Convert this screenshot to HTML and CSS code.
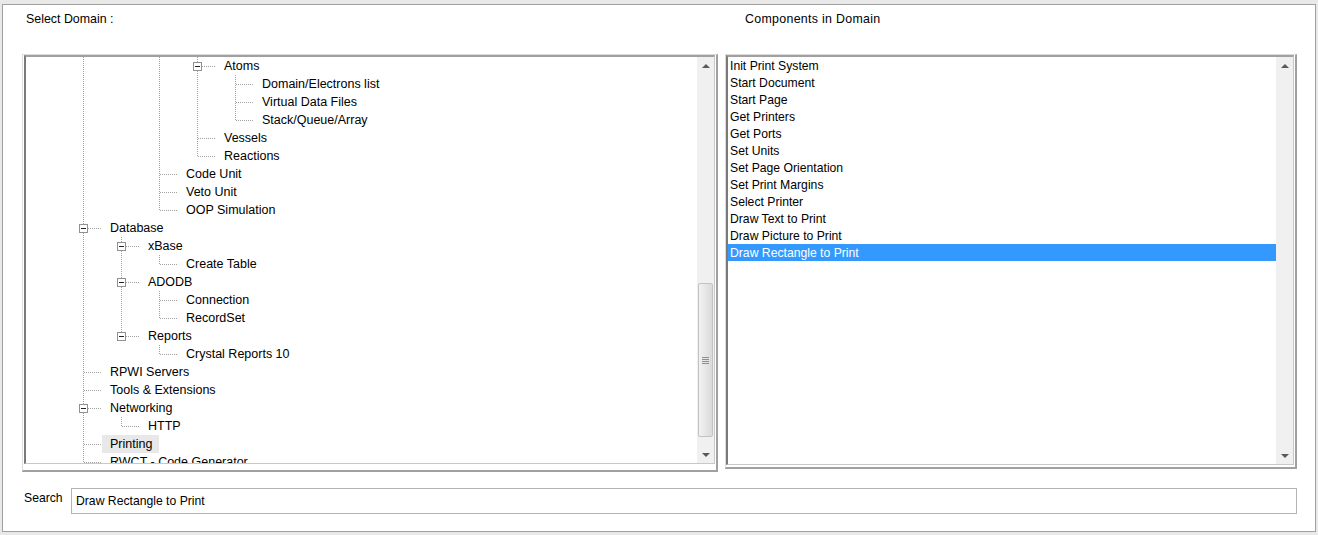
FILE: index.html
```html
<!DOCTYPE html>
<html>
<head>
<meta charset="utf-8">
<title>Select Domain</title>
<link rel="stylesheet" href="styles.css">
</head>
<body>
<div class="window">
  <div class="headings">
    <div class="heading heading-left">Select Domain :</div>
    <div class="heading heading-right">Components in Domain</div>
  </div>
  <div class="panes">
    <div class="frame frame-left">
      <div class="tree">
        <div class="tree-content">
          <div class="row"><span class="c l"></span><span class="c"></span><span class="c l"></span><span class="c t"><i class="box"></i></span><span class="lbl">Atoms</span></div>
          <div class="row"><span class="c l"></span><span class="c"></span><span class="c l"></span><span class="c l"></span><span class="c t"></span><span class="lbl">Domain/Electrons list</span></div>
          <div class="row"><span class="c l"></span><span class="c"></span><span class="c l"></span><span class="c l"></span><span class="c t"></span><span class="lbl">Virtual Data Files</span></div>
          <div class="row"><span class="c l"></span><span class="c"></span><span class="c l"></span><span class="c l"></span><span class="c e"></span><span class="lbl">Stack/Queue/Array</span></div>
          <div class="row"><span class="c l"></span><span class="c"></span><span class="c l"></span><span class="c t"></span><span class="lbl">Vessels</span></div>
          <div class="row"><span class="c l"></span><span class="c"></span><span class="c l"></span><span class="c e"></span><span class="lbl">Reactions</span></div>
          <div class="row"><span class="c l"></span><span class="c"></span><span class="c t"></span><span class="lbl">Code Unit</span></div>
          <div class="row"><span class="c l"></span><span class="c"></span><span class="c t"></span><span class="lbl">Veto Unit</span></div>
          <div class="row"><span class="c l"></span><span class="c"></span><span class="c e"></span><span class="lbl">OOP Simulation</span></div>
          <div class="row"><span class="c t"><i class="box"></i></span><span class="lbl">Database</span></div>
          <div class="row"><span class="c l"></span><span class="c t"><i class="box"></i></span><span class="lbl">xBase</span></div>
          <div class="row"><span class="c l"></span><span class="c l"></span><span class="c e"></span><span class="lbl">Create Table</span></div>
          <div class="row"><span class="c l"></span><span class="c t"><i class="box"></i></span><span class="lbl">ADODB</span></div>
          <div class="row"><span class="c l"></span><span class="c l"></span><span class="c t"></span><span class="lbl">Connection</span></div>
          <div class="row"><span class="c l"></span><span class="c l"></span><span class="c e"></span><span class="lbl">RecordSet</span></div>
          <div class="row"><span class="c l"></span><span class="c e"><i class="box"></i></span><span class="lbl">Reports</span></div>
          <div class="row"><span class="c l"></span><span class="c"></span><span class="c e"></span><span class="lbl">Crystal Reports 10</span></div>
          <div class="row"><span class="c t"></span><span class="lbl">RPWI Servers</span></div>
          <div class="row"><span class="c t"></span><span class="lbl">Tools &amp; Extensions</span></div>
          <div class="row"><span class="c t"><i class="box"></i></span><span class="lbl">Networking</span></div>
          <div class="row"><span class="c l"></span><span class="c e"></span><span class="lbl">HTTP</span></div>
          <div class="row"><span class="c t"></span><span class="lbl sel">Printing</span></div>
          <div class="row"><span class="c t"></span><span class="lbl">RWCT - Code Generator</span></div>
        </div>
        <div class="scrollbar">
          <div class="sb-btn"><i class="arrow-up"></i></div>
          <div class="sb-track">
            <div class="sb-thumb"><i class="grip"></i></div>
          </div>
          <div class="sb-btn"><i class="arrow-down"></i></div>
        </div>
      </div>
    </div>
    <div class="frame frame-right">
      <div class="list">
        <div class="list-content">
          <div class="item">Init Print System</div>
          <div class="item">Start Document</div>
          <div class="item">Start Page</div>
          <div class="item">Get Printers</div>
          <div class="item">Get Ports</div>
          <div class="item">Set Units</div>
          <div class="item">Set Page Orientation</div>
          <div class="item">Set Print Margins</div>
          <div class="item">Select Printer</div>
          <div class="item">Draw Text to Print</div>
          <div class="item">Draw Picture to Print</div>
          <div class="item selected">Draw Rectangle to Print</div>
        </div>
        <div class="scrollbar">
          <div class="sb-btn"><i class="arrow-up"></i></div>
          <div class="sb-track"></div>
          <div class="sb-btn"><i class="arrow-down"></i></div>
        </div>
      </div>
    </div>
  </div>
  <div class="search-row">
    <label class="search-label" for="search">Search</label>
    <input class="search-input" id="search" type="text" value="Draw Rectangle to Print">
  </div>
</div>
</body>
</html>
```

FILE: styles.css
```css
* { box-sizing: border-box; }

html, body {
  margin: 0;
  padding: 0;
}

body {
  background: #e9e9e9;
  font-family: "Liberation Sans", Arial, sans-serif;
  font-size: 12px;
  color: #000;
  width: 1318px;
  height: 535px;
  overflow: hidden;
}

.window {
  margin: 4px 2px 0 2px;
  height: 528px;
  background: #fff;
  border: 1px solid #a0a0a0;
  display: flex;
  flex-direction: column;
}

/* headings */
.headings {
  display: flex;
  height: 49px;
  padding-top: 7px;
  line-height: 14px;
  font-size: 12.4px;
}
.heading-left {
  width: 742px;
  padding-left: 23px;
}
.heading-right {
  padding-left: 0;
  letter-spacing: 0.3px;
}

/* panes */
.panes {
  display: flex;
  align-items: flex-start;
  padding-left: 19px;
  gap: 7px;
}

.frame {
  border-top: 1px solid #dcdcdc;
  border-left: 1px solid #dcdcdc;
  border-right: 2px solid #a0a0a0;
  border-bottom: 2px solid #a0a0a0;
}
.frame-left {
  width: 696px;
  height: 418px;
  padding: 0 1px 6px 1px;
}
.frame-right {
  width: 572px;
  height: 415px;
  padding: 0 1px 2px 0;
}

.tree, .list {
  height: 100%;
  display: flex;
  border-top: 2px solid #a0a0a0;
  border-left: 2px solid #7a7a7a;
  border-right: 1px solid #c8c8c8;
  border-bottom: 1px solid #c8c8c8;
  background: #fff;
  overflow: hidden;
}

.tree-content {
  flex: 1;
  overflow: hidden;
  padding-left: 38px;
  font-size: 12.5px;
}

.row {
  display: flex;
  height: 18px;
  align-items: stretch;
}

.c {
  position: relative;
  flex: none;
  width: 38px;
  height: 18px;
}

/* vertical dotted line through whole row */
.c.l::before,
.c.t::before,
.c.e::before {
  content: "";
  position: absolute;
  left: 19px;
  top: 0;
  width: 1px;
  height: 18px;
  background-image: linear-gradient(to bottom, #a0a0a0 50%, transparent 50%);
  background-size: 1px 2px;
}
.c.e::before {
  height: 10px;
}

/* horizontal connector */
.c.t::after,
.c.e::after {
  content: "";
  position: absolute;
  left: 20px;
  top: 9px;
  width: 18px;
  height: 1px;
  background-image: linear-gradient(to right, #a0a0a0 50%, transparent 50%);
  background-size: 2px 1px;
}

.box {
  position: absolute;
  left: 15px;
  top: 5px;
  width: 9px;
  height: 9px;
  border: 1px solid #919191;
  background: #fff;
  z-index: 1;
}
.box::after {
  content: "";
  position: absolute;
  left: 1px;
  top: 3px;
  width: 5px;
  height: 1px;
  background: #222;
}

.lbl {
  height: 18px;
  line-height: 17px;
  padding: 1px 7px 0 8px;
  white-space: nowrap;
}
.lbl.sel {
  background: #e8e8e8;
}

/* scrollbar */
.scrollbar {
  flex: none;
  width: 17px;
  display: flex;
  flex-direction: column;
  background: #f0f0f0;
}
.sb-btn {
  height: 17px;
  flex: none;
  display: flex;
  align-items: center;
  justify-content: center;
}
.sb-track {
  flex: 1;
}
.sb-thumb {
  margin-top: 209px;
  margin-left: 1px;
  width: 15px;
  height: 154px;
  border: 1px solid #c2c2c2;
  border-radius: 2px;
  background: linear-gradient(to right, #f2f2f2, #e4e4e4 60%, #dadada);
  display: flex;
  align-items: center;
  justify-content: center;
}
.grip {
  width: 7px;
  height: 7px;
  background: repeating-linear-gradient(to bottom, #8e8e8e 0 1px, transparent 1px 2px);
}
.arrow-up {
  width: 0;
  height: 0;
  border-left: 4px solid transparent;
  border-right: 4px solid transparent;
  border-bottom: 4px solid #5a5a5a;
}
.arrow-down {
  width: 0;
  height: 0;
  border-left: 4px solid transparent;
  border-right: 4px solid transparent;
  border-top: 4px solid #5a5a5a;
}

/* list */
.list-content {
  flex: 1;
  overflow: hidden;
  font-size: 12.2px;
}
.item {
  height: 17px;
  line-height: 16px;
  padding: 1px 0 0 2px;
  white-space: nowrap;
}
.item.selected {
  background: #3399ff;
  color: #fff;
}

/* search */
.search-row {
  display: flex;
  align-items: flex-start;
  margin-top: 16px;
  padding-left: 21px;
}
.search-label {
  width: 47px;
  line-height: 14px;
  padding-top: 3px;
  font-size: 12.2px;
}
.search-input {
  width: 1226px;
  height: 26px;
  border: 1px solid #b4b4b4;
  padding: 0 4px;
  font-family: "Liberation Sans", Arial, sans-serif;
  font-size: 12.2px;
  color: #000;
  outline: none;
  background: #fff;
}
```
